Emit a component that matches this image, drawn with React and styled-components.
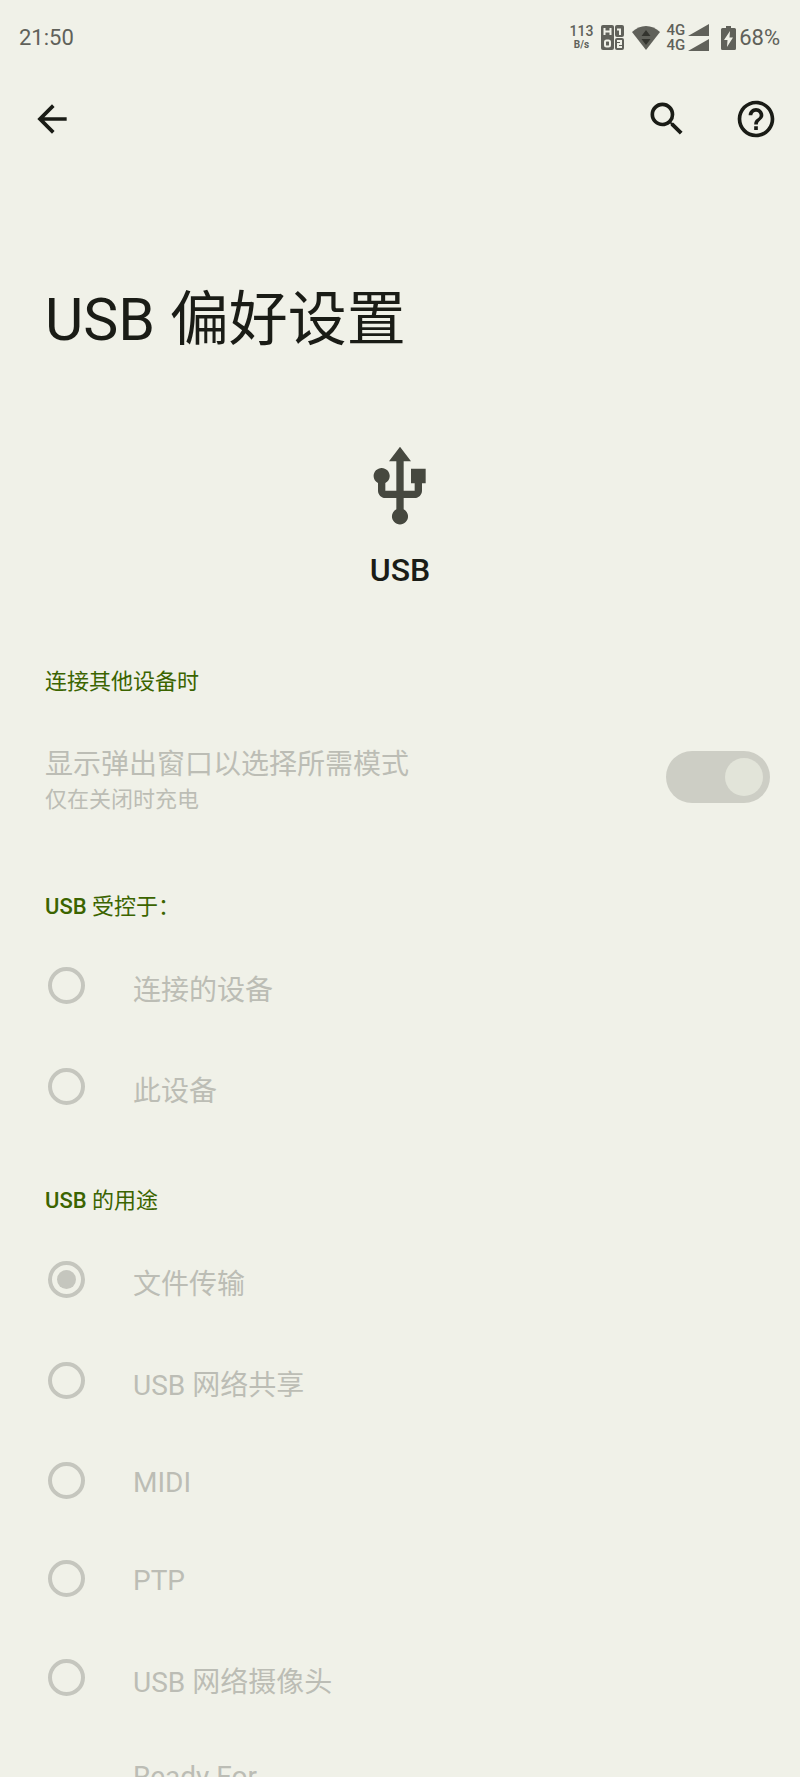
import React from 'react';

import styled, { createGlobalStyle, ThemeProvider } from 'styled-components';


const theme = {
  background: '#f0f1e8',
  text: '#1a1c16',
  accent: '#3b6400',
  disabled: '#bcbdb5',
  control: '#c5c6be',
  track: '#cdcec5',
  thumb: '#e2e4d9',
  icon: '#46483f',
  status: '#60615a',
  font: '"Roboto", "Noto Sans CJK SC", sans-serif',
};

const GlobalStyle = createGlobalStyle`
  * {
    box-sizing: border-box;
  }

  body {
    margin: 0;
    background-color: ${theme.background};
  }
`;

const Screen = styled.div`
  height: 100vh;
  overflow: hidden;
  background-color: ${props => props.theme.background};
  color: ${props => props.theme.text};
  font-family: ${props => props.theme.font};
`;

const StatusBar = styled.div`
  height: 75px;
  padding: 0 20px 0 19px;
  display: flex;
  justify-content: space-between;
  align-items: center;
  color: ${props => props.theme.status};
  font-size: 22px;
`;

const StatusItems = styled.div`
  display: flex;
  align-items: center;
`;

const NetSpeed = styled.div`
  margin-right: 8px;
  text-align: center;
  font-size: 14px;
  font-weight: 500;
  line-height: 15px;
`;

const NetUnit = styled.div`
  font-size: 10px;
  font-weight: 700;
  line-height: 12px;
`;

const StatusIcon = styled.svg`
  display: block;
  fill: currentColor;
  margin-right: ${props => props.$gap || 0}px;
`;

const Signals = styled.div`
  margin-right: 12px;
`;

const Signal = styled.div`
  height: 15px;
  display: flex;
  align-items: center;
  gap: 3px;
  font-size: 15px;
  font-weight: 500;
  line-height: 15px;
`;

const Toolbar = styled.header`
  height: 88px;
  padding-left: 8px;
  display: flex;
  align-items: center;
  gap: 1px;
`;

const ToolbarButton = styled.button`
  width: 88px;
  height: 88px;
  padding: 0;
  border: 0;
  display: flex;
  align-items: center;
  justify-content: center;
  background: none;
  color: inherit;
  cursor: pointer;
`;

const ToolbarSpace = styled.div`
  flex: 1;
`;

const Icon = styled.svg`
  width: ${props => props.$size}px;
  height: ${props => props.$size}px;
  display: block;
  fill: currentColor;
`;

const Title = styled.h1`
  margin: 0;
  padding: 113px 45px 79px;
  font-size: 59px;
  font-weight: 400;
  line-height: 88px;
`;

const Entity = styled.div`
  height: 175px;
  display: flex;
  flex-direction: column;
  align-items: center;
  gap: 21px;
`;

const EntityIcon = styled.div`
  color: ${props => props.theme.icon};
`;

const EntityName = styled.div`
  font-size: 32px;
  font-weight: 500;
  line-height: 36px;
`;

const Category = styled.section`
  margin: 0;
`;

const CategoryTitle = styled.h2`
  height: 92px;
  margin: 0;
  padding: 48px 45px 0;
  color: ${props => props.theme.accent};
  font-size: 22px;
  font-weight: 500;
  line-height: 32px;

  /* only the latin part is medium weight */
  span {
    font-weight: 400;
  }
`;

const rowHeights = {
  compact: 98,
  normal: 101,
  tall: 148,
};

const Row = styled.label`
  min-height: ${props => rowHeights[props.$size || 'normal']}px;
  padding: 30px 30px 30px 45px;
  display: flex;
  align-items: center;
  color: ${props => props.theme.disabled};
`;

const RowText = styled.div`
  position: relative;
  top: 2px;
  flex: 1;
  align-self: ${props => props.$top ? 'flex-start' : 'center'};
`;

const RowTitle = styled.div`
  font-size: 28px;
`;

const RowSummary = styled.div`
  margin-top: 2px;
  font-size: 22px;
  line-height: 31px;
`;

const Radio = styled.input`
  appearance: none;
  width: 37px;
  height: 37px;
  margin: 0 48px 0 3px;
  border: 4px solid ${props => props.theme.control};
  border-radius: 50%;
  display: grid;
  place-items: center;

  &:checked::before {
    content: '';
    width: 19px;
    height: 19px;
    border-radius: 50%;
    background-color: ${props => props.theme.control};
  }
`;

const Switch = styled.input`
  appearance: none;
  width: 104px;
  height: 52px;
  margin: 0;
  padding: 0 7px;
  border-radius: 26px;
  display: flex;
  align-items: center;
  justify-content: flex-end;
  background-color: ${props => props.theme.track};

  &::before {
    content: '';
    width: 38px;
    height: 38px;
    border-radius: 50%;
    background-color: ${props => props.theme.thumb};
  }
`;

const controllers = [
  { label: '连接的设备' },
  { label: '此设备' },
];

const uses = [
  { label: '文件传输', checked: true },
  { label: 'USB 网络共享' },
  { label: 'MIDI', size: 'compact' },
  { label: 'PTP', size: 'compact' },
  { label: 'USB 网络摄像头' },
  { label: 'Ready For', size: 'tall' },
];

const SignalRow = () => (
  <Signal>
    4G
    <StatusIcon width="21" height="12" viewBox="0 0 21 12">
      <path d="M21 0v12H0z" />
    </StatusIcon>
  </Signal>
);

const RadioGroup = ({ name, label, options }) => (
  <div role="radiogroup" aria-label={label}>
    {options.map(option => (
      <Row key={option.label} $size={option.size}>
        <Radio type="radio" name={name} defaultChecked={option.checked} disabled />
        <RowText $top={option.size === 'tall'}>
          <RowTitle>{option.label}</RowTitle>
        </RowText>
      </Row>
    ))}
  </div>
);

export default function App() {
  return (
    <ThemeProvider theme={theme}>
      <GlobalStyle />
      <Screen lang="zh-CN">
        <StatusBar>
          <div>21:50</div>
          <StatusItems>
            <NetSpeed>
              113
              <NetUnit>B/s</NetUnit>
            </NetSpeed>
            <StatusIcon $gap={8} width="23" height="25" viewBox="0 0 23 25">
              <rect width="13" height="25" rx="2" />
              <rect x="14" width="9" height="12" rx="2" />
              <rect x="14" y="13" width="9" height="12" rx="2" />
              <g fill="none" stroke={theme.background} strokeWidth="2">
                <path d="M3.5 3v7M9.5 3v7M3.5 6.5h6" />
                <rect x="4" y="15.5" width="5" height="6" rx="1.5" />
                <path d="M16 4.5h3V10" />
                <path d="M16 16h4v3h-3v3h4" />
              </g>
            </StatusIcon>
            <StatusIcon $gap={6} width="28" height="24" viewBox="0 0 28 24">
              <path d="M0 6C8-2 20-2 28 6L14 24z" />
              <path d="M14 4l4.5 6h-9zM9.5 13h9L14 19z" fill="#33342e" />
            </StatusIcon>
            <Signals>
              <SignalRow />
              <SignalRow />
            </Signals>
            <StatusIcon $gap={3} width="15" height="24" viewBox="0 0 15 24">
              <path d="M5 0h5v2h3.5q1.5 0 1.5 1.5v19q0 1.5-1.5 1.5h-12Q0 24 0 22.5v-19Q0 2 1.5 2H5z" />
              <path d="M9 5l-6 9h3.5L6 21l6-9.5H8.5z" fill={theme.background} />
            </StatusIcon>
            <div>68%</div>
          </StatusItems>
        </StatusBar>

        <Toolbar>
          <ToolbarButton aria-label="返回">
            <Icon $size={44} viewBox="0 0 24 24">
              <path d="M20 11H7.83l5.59-5.59L12 4l-8 8 8 8 1.41-1.41L7.83 13H20v-2z" />
            </Icon>
          </ToolbarButton>
          <ToolbarSpace />
          <ToolbarButton aria-label="搜索">
            <Icon $size={44} viewBox="0 0 24 24">
              <path d="M15.5 14h-.79l-.28-.27A6.471 6.471 0 0 0 16 9.5 6.5 6.5 0 1 0 9.5 16c1.61 0 3.09-.59 4.23-1.57l.27.28v.79l5 4.99L20.49 19l-4.99-5zm-6 0C7.01 14 5 11.99 5 9.5S7.01 5 9.5 5 14 7.01 14 9.5 11.99 14 9.5 14z" />
            </Icon>
          </ToolbarButton>
          <ToolbarButton aria-label="帮助">
            <Icon $size={44} viewBox="0 0 24 24">
              <path d="M11 18h2v-2h-2v2zm1-16C6.48 2 2 6.48 2 12s4.48 10 10 10 10-4.48 10-10S17.52 2 12 2zm0 18c-4.41 0-8-3.59-8-8s3.59-8 8-8 8 3.59 8 8-3.59 8-8 8zm0-14c-2.21 0-4 1.79-4 4h2c0-1.1.9-2 2-2s2 .9 2 2c0 2-3 1.75-3 5h2c0-2.25 3-2.5 3-5 0-2.21-1.79-4-4-4z" />
            </Icon>
          </ToolbarButton>
        </Toolbar>

        <Title>USB 偏好设置</Title>

        <Entity>
          <EntityIcon>
            <Icon $size={88} viewBox="0 0 24 24">
              <path d="M15 7v4h1v2h-3V5h2l-3-4-3 4h2v8H8v-2.07c.7-.37 1.2-1.08 1.2-1.93 0-1.21-.99-2.2-2.2-2.2-1.21 0-2.2.99-2.2 2.2 0 .85.5 1.56 1.2 1.93V13c0 1.11.89 2 2 2h3v3.05c-.71.37-1.2 1.1-1.2 1.95 0 1.22.99 2.2 2.2 2.2 1.21 0 2.2-.98 2.2-2.2 0-.85-.49-1.58-1.2-1.95V15h3c1.11 0 2-.89 2-2v-2h1V7h-4z" />
            </Icon>
          </EntityIcon>
          <EntityName>USB</EntityName>
        </Entity>

        <Category>
          <CategoryTitle><span>连接其他设备时</span></CategoryTitle>
          <Row>
            <RowText>
              <RowTitle>显示弹出窗口以选择所需模式</RowTitle>
              <RowSummary>仅在关闭时充电</RowSummary>
            </RowText>
            <Switch type="checkbox" role="switch" defaultChecked disabled />
          </Row>
        </Category>

        <Category>
          <CategoryTitle>USB <span>受控于：</span></CategoryTitle>
          <RadioGroup name="controller" label="USB 受控于" options={controllers} />
        </Category>

        <Category>
          <CategoryTitle>USB <span>的用途</span></CategoryTitle>
          <RadioGroup name="use" label="USB 的用途" options={uses} />
        </Category>
      </Screen>
    </ThemeProvider>
  );
}
